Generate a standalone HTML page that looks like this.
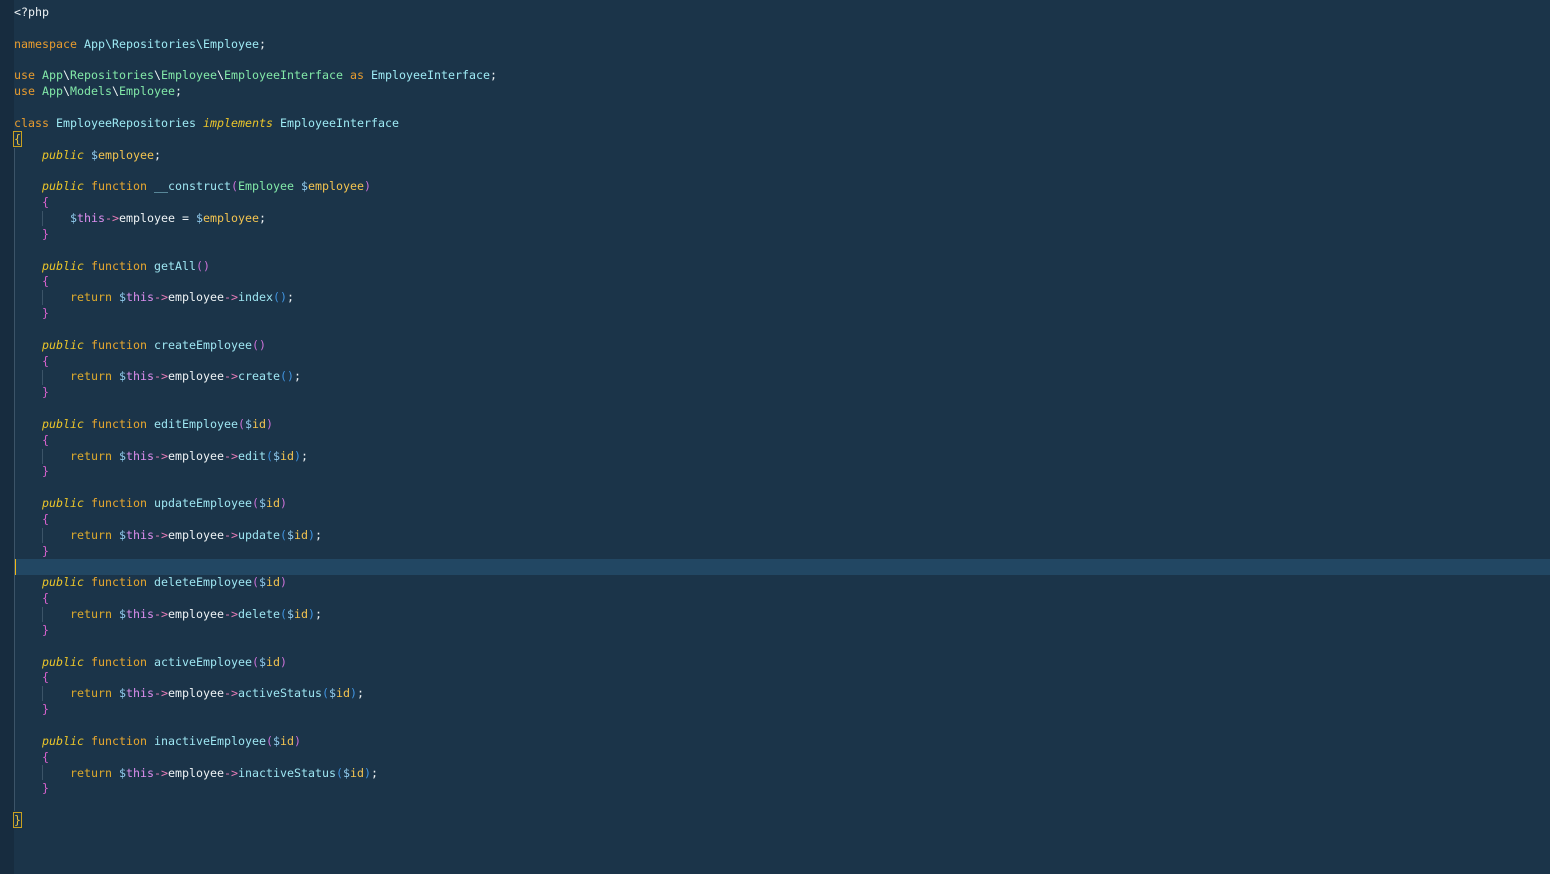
<!DOCTYPE html>
<html><head><meta charset="utf-8"><style>
html,body{margin:0;padding:0;width:1550px;height:874px;overflow:hidden;background:#1b3449;}
.g{position:absolute;left:0;top:0;width:14px;height:874px;background:#172c3f;}
.hl{position:absolute;left:14px;top:559px;width:1536px;height:16px;background:#224763;}
.cur{position:absolute;left:14px;top:559px;width:2px;height:16px;background:#f0b818;}
.ig{position:absolute;width:1px;background:#3c5468;}
pre{position:absolute;left:14px;top:5px;margin:0;font-family:"DejaVu Sans Mono","Liberation Mono",monospace;font-size:11.63px;line-height:15.84px;color:#eef3f5;}
.k{color:#e89c2f}.n{color:#9eeaf4}.u{color:#82e8a8}.p{color:#ecc62a;font-style:italic}
.f{color:#e8a72f}.fn{color:#9ee6f2}.v{color:#f3c450}.d{color:#92ccee}.t{color:#dc8eee}
.a{color:#e67cb8}.pa{color:#cc72d8}.pb{color:#4094e0}.b{color:#d862ce}.r{color:#ddaa2d}
.br{outline:1px solid #c8a020;color:#e8c040}
</style></head><body>
<div class="g"></div>
<div class="hl"></div><div class="cur"></div>
<div class="ig" style="left:14px;top:148px;height:663px"></div>
<div class="ig" style="left:42px;top:211px;height:15px"></div>
<div class="ig" style="left:42px;top:290px;height:15px"></div>
<div class="ig" style="left:42px;top:370px;height:15px"></div>
<div class="ig" style="left:42px;top:449px;height:15px"></div>
<div class="ig" style="left:42px;top:528px;height:15px"></div>
<div class="ig" style="left:42px;top:607px;height:15px"></div>
<div class="ig" style="left:42px;top:686px;height:15px"></div>
<div class="ig" style="left:42px;top:765px;height:15px"></div>
<pre>&lt;?php

<span class="k">namespace</span> <span class="n">App\Repositories\Employee</span>;

<span class="k">use</span> <span class="u">App</span>\<span class="u">Repositories</span>\<span class="u">Employee</span>\<span class="u">EmployeeInterface</span> <span class="k">as</span> <span class="n">EmployeeInterface</span>;
<span class="k">use</span> <span class="u">App</span>\<span class="u">Models</span>\<span class="u">Employee</span>;

<span class="k">class</span> <span class="n">EmployeeRepositories</span> <span class="p">implements</span> <span class="n">EmployeeInterface</span>
<span class="br">{</span>
    <span class="p">public</span> <span class="d">$</span><span class="v">employee</span>;

    <span class="p">public</span> <span class="f">function</span> <span class="fn">__construct</span><span class="pa">(</span><span class="u">Employee</span> <span class="d">$</span><span class="v">employee</span><span class="pa">)</span>
    <span class="b">{</span>
        <span class="d">$</span><span class="t">this</span><span class="a">-&gt;</span>employee = <span class="d">$</span><span class="v">employee</span>;
    <span class="b">}</span>

    <span class="p">public</span> <span class="f">function</span> <span class="fn">getAll</span><span class="pa">()</span>
    <span class="b">{</span>
        <span class="r">return</span> <span class="d">$</span><span class="t">this</span><span class="a">-&gt;</span>employee<span class="a">-&gt;</span><span class="fn">index</span><span class="pb">()</span>;
    <span class="b">}</span>

    <span class="p">public</span> <span class="f">function</span> <span class="fn">createEmployee</span><span class="pa">()</span>
    <span class="b">{</span>
        <span class="r">return</span> <span class="d">$</span><span class="t">this</span><span class="a">-&gt;</span>employee<span class="a">-&gt;</span><span class="fn">create</span><span class="pb">()</span>;
    <span class="b">}</span>

    <span class="p">public</span> <span class="f">function</span> <span class="fn">editEmployee</span><span class="pa">(</span><span class="d">$</span><span class="v">id</span><span class="pa">)</span>
    <span class="b">{</span>
        <span class="r">return</span> <span class="d">$</span><span class="t">this</span><span class="a">-&gt;</span>employee<span class="a">-&gt;</span><span class="fn">edit</span><span class="pb">(</span><span class="d">$</span><span class="v">id</span><span class="pb">)</span>;
    <span class="b">}</span>

    <span class="p">public</span> <span class="f">function</span> <span class="fn">updateEmployee</span><span class="pa">(</span><span class="d">$</span><span class="v">id</span><span class="pa">)</span>
    <span class="b">{</span>
        <span class="r">return</span> <span class="d">$</span><span class="t">this</span><span class="a">-&gt;</span>employee<span class="a">-&gt;</span><span class="fn">update</span><span class="pb">(</span><span class="d">$</span><span class="v">id</span><span class="pb">)</span>;
    <span class="b">}</span>

    <span class="p">public</span> <span class="f">function</span> <span class="fn">deleteEmployee</span><span class="pa">(</span><span class="d">$</span><span class="v">id</span><span class="pa">)</span>
    <span class="b">{</span>
        <span class="r">return</span> <span class="d">$</span><span class="t">this</span><span class="a">-&gt;</span>employee<span class="a">-&gt;</span><span class="fn">delete</span><span class="pb">(</span><span class="d">$</span><span class="v">id</span><span class="pb">)</span>;
    <span class="b">}</span>

    <span class="p">public</span> <span class="f">function</span> <span class="fn">activeEmployee</span><span class="pa">(</span><span class="d">$</span><span class="v">id</span><span class="pa">)</span>
    <span class="b">{</span>
        <span class="r">return</span> <span class="d">$</span><span class="t">this</span><span class="a">-&gt;</span>employee<span class="a">-&gt;</span><span class="fn">activeStatus</span><span class="pb">(</span><span class="d">$</span><span class="v">id</span><span class="pb">)</span>;
    <span class="b">}</span>

    <span class="p">public</span> <span class="f">function</span> <span class="fn">inactiveEmployee</span><span class="pa">(</span><span class="d">$</span><span class="v">id</span><span class="pa">)</span>
    <span class="b">{</span>
        <span class="r">return</span> <span class="d">$</span><span class="t">this</span><span class="a">-&gt;</span>employee<span class="a">-&gt;</span><span class="fn">inactiveStatus</span><span class="pb">(</span><span class="d">$</span><span class="v">id</span><span class="pb">)</span>;
    <span class="b">}</span>

<span class="br">}</span>
</pre>
</body></html>
